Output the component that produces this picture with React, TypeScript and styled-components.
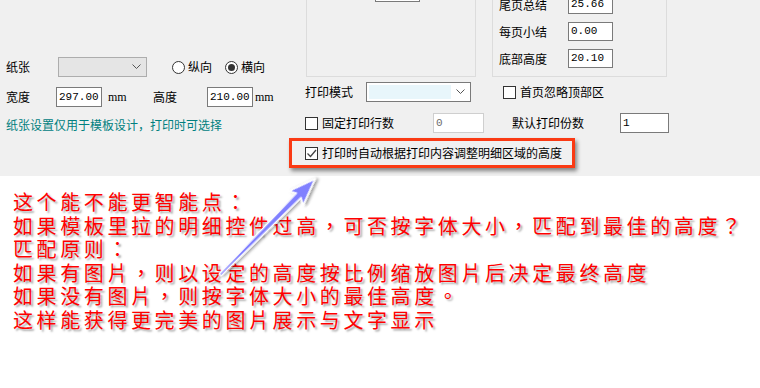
import React from "react";
import styled, { createGlobalStyle } from "styled-components";

const GlobalStyle = createGlobalStyle`
  html, body { margin: 0; padding: 0; background: #fff; }
  body { font-family: "Noto Sans CJK SC", "Noto Sans", sans-serif; }
`;

const Page = styled.div`
  position: relative;
  width: 760px;
  height: 388px;
  overflow: hidden;
  background: #fff;
`;

const Dialog = styled.div`
  display: flex;
  height: 176px;
  background: #f0f0f0;
  font-size: 12px;
  color: #000;
  overflow: hidden;
`;

const LeftCol = styled.div`
  width: 305px;
  flex-shrink: 0;
  box-sizing: border-box;
  padding: 57px 0 0 6px;
`;

const RightCol = styled.div`
  flex: 1;
  display: flex;
  flex-direction: column;
`;

const Row = styled.div<{ $top?: number; $h?: number }>`
  display: flex;
  align-items: center;
  height: ${(p) => p.$h ?? 20}px;
  margin-top: ${(p) => p.$top ?? 0}px;
`;

const Label = styled.span<{ $w?: number; $ml?: number }>`
  width: ${(p) => (p.$w ? p.$w + "px" : "auto")};
  margin-left: ${(p) => p.$ml ?? 0}px;
  flex-shrink: 0;
  white-space: nowrap;
  line-height: 16px;
`;

const Unit = styled.span<{ $w?: number; $ml?: number }>`
  width: ${(p) => (p.$w ? p.$w + "px" : "auto")};
  margin-left: ${(p) => p.$ml ?? 0}px;
  flex-shrink: 0;
  font-family: "Liberation Serif", serif;
  font-size: 12px;
`;

const TextBox = styled.div<{ $w: number; $h?: number; $ml?: number; $disabled?: boolean }>`
  box-sizing: border-box;
  flex-shrink: 0;
  width: ${(p) => p.$w}px;
  height: ${(p) => p.$h ?? 20}px;
  margin-left: ${(p) => p.$ml ?? 0}px;
  border: 1px solid ${(p) => (p.$disabled ? "#cfcfcf" : "#7a7a7a")};
  background: #fff;
  color: ${(p) => (p.$disabled ? "#6d6d6d" : "#000")};
  font-family: "Liberation Mono", monospace;
  font-size: 11px;
  line-height: ${(p) => (p.$h ?? 20) - 2}px;
  padding-left: 2px;
`;

const Dropdown = styled.div<{ $w: number; $gray?: boolean }>`
  box-sizing: border-box;
  flex-shrink: 0;
  width: ${(p) => p.$w}px;
  height: 20px;
  display: flex;
  align-items: center;
  padding: 2px;
  border: 1px solid ${(p) => (p.$gray ? "#adadad" : "#7a7a7a")};
  background: ${(p) => (p.$gray ? "#e5e5e5" : "#fff")};
`;

const DropField = styled.div<{ $w: number }>`
  width: ${(p) => p.$w}px;
  height: 100%;
  background: #e8f6fb;
`;

const Chevron = styled.svg`
  margin-left: auto;
  margin-right: 3px;
`;

const Radio = styled.span<{ $checked?: boolean; $ml?: number }>`
  box-sizing: border-box;
  flex-shrink: 0;
  width: 13px;
  height: 13px;
  margin-left: ${(p) => p.$ml ?? 0}px;
  margin-right: 3px;
  border-radius: 50%;
  border: 1px solid #333;
  background: #fff;
  display: flex;
  align-items: center;
  justify-content: center;
  &::after {
    content: "";
    display: ${(p) => (p.$checked ? "block" : "none")};
    width: 7px;
    height: 7px;
    border-radius: 50%;
    background: #333;
  }
`;

const CheckBox = styled.span<{ $ml?: number }>`
  box-sizing: border-box;
  flex-shrink: 0;
  width: 13px;
  height: 13px;
  margin-left: ${(p) => p.$ml ?? 0}px;
  margin-right: 4px;
  border: 1px solid #333;
  background: #fff;
  display: flex;
`;

const Hint = styled.div`
  margin-top: 10px;
  color: #00807f;
  line-height: 16px;
  white-space: nowrap;
`;

const GroupRow = styled.div`
  display: flex;
  height: 77px;
  flex-shrink: 0;
`;

const GroupBox = styled.div<{ $w: number; $ml: number }>`
  box-sizing: border-box;
  width: ${(p) => p.$w}px;
  margin-left: ${(p) => p.$ml}px;
  height: 77px;
  border: 1px solid #dcdcdc;
  border-top: none;
`;

const CutBox = styled.div`
  box-sizing: border-box;
  width: 45px;
  height: 2px;
  margin-left: 68px;
  border: 1px solid #7a7a7a;
  border-top: none;
  background: #fff;
`;

const FieldList = styled.div`
  display: flex;
  flex-direction: column;
  gap: 8px;
  margin-top: -5px;
  padding-left: 6px;
`;

const Highlight = styled.div`
  box-sizing: border-box;
  width: 286px;
  height: 30px;
  margin: 5px 0 0 -16px;
  padding-left: 13px;
  display: flex;
  align-items: center;
  border: 3px solid #fa3a14;
  box-shadow: 2px 3px 4px rgba(0, 0, 0, 0.45);
`;

const Notes = styled.div`
  padding: 14px 0 0 13px;
  font-family: "Noto Sans CJK TC", "Noto Sans CJK SC", sans-serif;
  color: #ff0000;
  font-size: 20px;
  line-height: 23.6px;
  letter-spacing: 3.6px;
  white-space: nowrap;
  text-shadow: 2px 2px 2px rgba(0, 0, 0, 0.35);
`;

const ArrowLayer = styled.svg`
  position: absolute;
  left: 0;
  top: 0;
  pointer-events: none;
`;

const ChevronIcon = () => (
  <Chevron width="9" height="6" viewBox="0 0 9 6">
    <polyline points="0.5,0.5 4.5,4.5 8.5,0.5" fill="none" stroke="#555" strokeWidth="1" />
  </Chevron>
);

const Tick = () => (
  <svg width="11" height="11" viewBox="0 0 11 11">
    <polyline points="1.5,5.5 4.5,8.5 10,2" fill="none" stroke="#444" strokeWidth="1.3" />
  </svg>
);

const footerFields = [
  { label: "尾页总结", value: "25.66" },
  { label: "每页小结", value: "0.00" },
  { label: "底部高度", value: "20.10" },
];

const notes = [
  "这个能不能更智能点：",
  "如果模板里拉的明细控件过高，可否按字体大小，匹配到最佳的高度？",
  "匹配原则：",
  "如果有图片，则以设定的高度按比例缩放图片后决定最终高度",
  "如果没有图片，则按字体大小的最佳高度。",
  "这样能获得更完美的图片展示与文字显示",
];

export default function App() {
  return (
    <Page>
      <GlobalStyle />
      <Dialog>
        <LeftCol>
          <Row>
            <Label $w={52}>纸张</Label>
            <Dropdown $w={89} $gray>
              <ChevronIcon />
            </Dropdown>
            <Radio $ml={25} />
            <Label $w={37}>纵向</Label>
            <Radio $checked />
            <Label>横向</Label>
          </Row>
          <Row $top={10}>
            <Label $w={50}>宽度</Label>
            <TextBox $w={46}>297.00</TextBox>
            <Unit $w={45} $ml={6}>mm</Unit>
            <Label $w={54}>高度</Label>
            <TextBox $w={46}>210.00</TextBox>
            <Unit $ml={2}>mm</Unit>
          </Row>
          <Hint>纸张设置仅用于模板设计，打印时可选择</Hint>
        </LeftCol>
        <RightCol>
          <GroupRow>
            <GroupBox $w={170} $ml={1}>
              <CutBox />
            </GroupBox>
            <GroupBox $w={175} $ml={16}>
              <FieldList>
                {footerFields.map((f) => (
                  <Row key={f.label} $h={19}>
                    <Label $w={69}>{f.label}</Label>
                    <TextBox $w={45} $h={19}>{f.value}</TextBox>
                  </Row>
                ))}
              </FieldList>
            </GroupBox>
          </GroupRow>
          <Row $top={5}>
            <Label $w={61}>打印模式</Label>
            <Dropdown $w={105}>
              <DropField $w={82} />
              <ChevronIcon />
            </Dropdown>
            <CheckBox $ml={32} />
            <Label>首页忽略顶部区</Label>
          </Row>
          <Row $top={11}>
            <CheckBox />
            <Label $w={111}>固定打印行数</Label>
            <TextBox $w={51} $disabled>0</TextBox>
            <Label $w={108} $ml={28}>默认打印份数</Label>
            <TextBox $w={49}>1</TextBox>
          </Row>
          <Highlight>
            <CheckBox>
              <Tick />
            </CheckBox>
            <Label>打印时自动根据打印内容调整明细区域的高度</Label>
          </Highlight>
        </RightCol>
      </Dialog>
      <Notes>
        {notes.map((line) => (
          <div key={line}>{line}</div>
        ))}
      </Notes>
      <ArrowLayer width="760" height="388" viewBox="0 0 760 388">
        <defs>
          <filter id="arrowShadow" x="-20%" y="-20%" width="140%" height="140%">
            <feDropShadow dx="2" dy="2" stdDeviation="1.5" floodColor="#000" floodOpacity="0.4" />
          </filter>
        </defs>
        <g transform="translate(220 275) rotate(-45.3)" filter="url(#arrowShadow)">
          <polygon
            points="0,-1.2 112,-3.2 108,-10 135,0 108,10 112,3.2 0,1.2"
            fill="#8080ff"
            stroke="#fff"
            strokeWidth="1.5"
            strokeLinejoin="round"
          />
        </g>
      </ArrowLayer>
    </Page>
  );
}
